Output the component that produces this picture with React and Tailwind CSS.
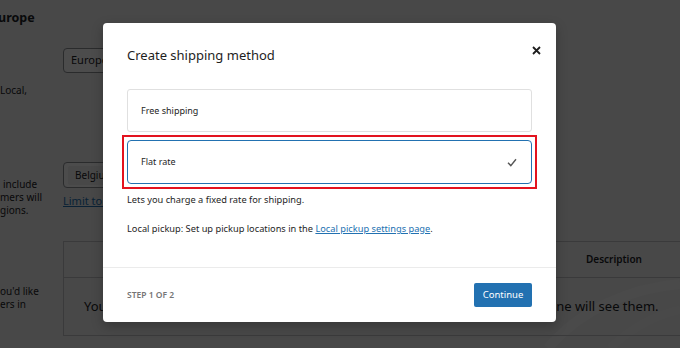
import React from "react";

function Check() {
  return (
    <svg width="10" height="9" viewBox="0 0 10 9" fill="none">
      <path d="M1 4.8 L3.8 7.6 L9 1.2" stroke="#555" strokeWidth="1.4" />
    </svg>
  );
}

function Close() {
  return (
    <svg width="9" height="9" viewBox="0 0 9 9" fill="none">
      <path d="M1 1 L8 8 M8 1 L1 8" stroke="#1e1e1e" strokeWidth="1.8" />
    </svg>
  );
}

export default function App() {
  return (
    <div className="relative w-[680px] h-[348px] overflow-hidden bg-[#f0f0f1] text-[#1d2327] font-['Noto_Sans',sans-serif]">
      {/* faint decoration behind the page */}
      <svg className="absolute left-[540px] top-[270px]" width="140" height="78" viewBox="0 0 140 78" fill="none">
        <path d="M8 78 C40 40 90 18 140 14" stroke="#f8f8f8" strokeWidth="10" />
        <path d="M70 78 C95 55 120 44 140 40" stroke="#f6f6f6" strokeWidth="8" />
      </svg>

      {/* page behind the modal */}
      <div className="relative flex pt-[8px]">
        <div className="w-[63px] shrink-0 text-[10px] leading-[13px]">
          <div className="-ml-[2px] text-[12.5px] font-bold leading-[20px]">urope</div>
          <div className="mt-[56px]">Local,</div>
          <div className="mt-[81px] pl-[3px]">include</div>
          <div>mers will</div>
          <div>gions.</div>
          <div className="mt-[68px]">ou'd like</div>
          <div>ers in</div>
        </div>
        <div className="flex-1 pt-[40px]">
          <div className="w-[300px] h-[25px] border border-[#8c8f94] rounded-[4px] bg-white flex items-center pl-[7px] text-[11px]">
            Europe
          </div>
          <div className="mt-[89px] w-[300px] h-[26px] border border-[#8c8f94] rounded-[4px] bg-white flex items-center pl-[4px]">
            <span className="h-[19px] px-[7px] flex items-center bg-[#f0f0f0] rounded-[2px] text-[10px]">Belgium</span>
          </div>
          <div className="mt-[6px] text-[11px] leading-[14px] text-[#2271b1] underline">Limit to specific ZIP/postcodes</div>
          <div className="mt-[33px] w-[660px] border border-[#c3c4c7]">
            <div className="h-[36px] border-b border-[#c3c4c7] flex items-center justify-end pr-[80px] text-[10px] font-semibold">
              Description
            </div>
            <div className="h-[57px] flex items-center pl-[20px] text-[13px] whitespace-nowrap">
              You can add shipping methods within this zone. Only customers within the zone will see them.
            </div>
          </div>
        </div>
      </div>

      {/* overlay */}
      <div className="absolute inset-0 bg-black/70" />

      {/* modal */}
      <div className="absolute left-[103px] top-[23px] w-[453px] h-[299px] bg-white rounded-[4px] shadow-[0_4px_12px_rgba(0,0,0,0.25)] flex flex-col text-[#1e1e1e]">
        <button className="absolute top-[23px] right-[15px] p-0">
          <Close />
        </button>
        <div className="px-6 pt-[22px] text-[13px] leading-[20px]">Create shipping method</div>
        <div className="flex-1 px-6 pt-[24px]">
          <div className="h-[43px] border border-[#e0e0e0] rounded-[3px] flex items-center px-[13px] text-[9px]">
            Free shipping
          </div>
          <div className="relative mt-[8px]">
            <div className="absolute -inset-[5px] border-2 border-[#e3131f]" />
            <div className="h-[44px] border-[1.5px] border-[#2271b1] rounded-[4px] flex items-center justify-between pl-[13px] pr-[14px] text-[9px]">
              <span>Flat rate</span>
              <Check />
            </div>
          </div>
          <p className="mt-[9px] text-[9.25px] leading-[14px]">Lets you charge a fixed rate for shipping.</p>
          <p className="mt-[15px] text-[9.25px] leading-[14px]">
            Local pickup: Set up pickup locations in the{" "}
            <span className="text-[#2271b1] underline">Local pickup settings page</span>.
          </p>
        </div>
        <div className="h-[55px] border-t border-[#ebebeb] px-6 flex items-center justify-between">
          <span className="text-[8.5px] font-semibold text-[#757575] uppercase">Step 1 of 2</span>
          <button className="w-[58px] h-[24px] bg-[#2271b1] rounded-[2px] text-white text-[9.5px]">Continue</button>
        </div>
      </div>
    </div>
  );
}
